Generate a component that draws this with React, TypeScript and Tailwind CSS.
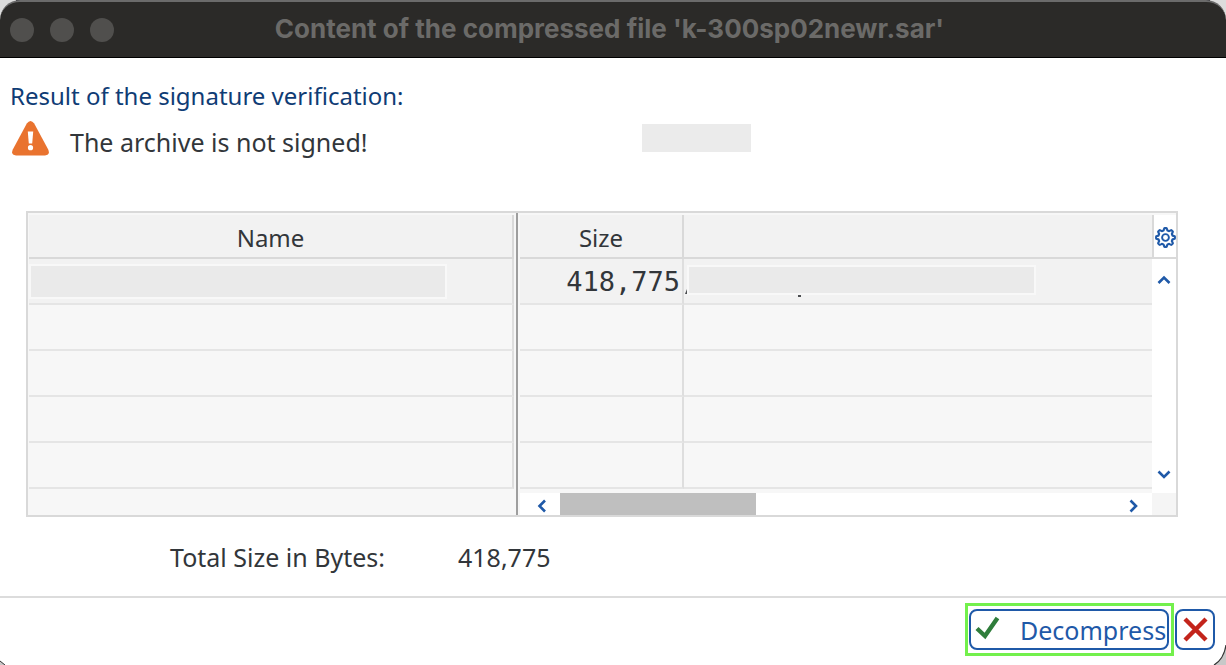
import React from "react";

const bodyText = "font-['Noto_Sans','Liberation_Sans',sans-serif] text-2xl leading-8";
const emptyRows = [1, 2, 3, 4];

function Chevron({ d, label }: { d: string; label: string }) {
  return (
    <button type="button" aria-label={label} className="flex size-5 items-center justify-center">
      <svg width="14" height="14" viewBox="0 0 14 14" fill="none" stroke="#1f59a8" strokeWidth="2.6">
        <path d={d} />
      </svg>
    </button>
  );
}

function Gear() {
  const points: string[] = [];
  for (let i = 0; i < 96; i++) {
    const a = (i / 96) * Math.PI * 2;
    const wave = Math.max(-1, Math.min(1, Math.cos(a * 8) * 1.8));
    const r = 8.3 + wave * 1.1;
    points.push(`${(10.5 + r * Math.sin(a)).toFixed(2)},${(10.5 - r * Math.cos(a)).toFixed(2)}`);
  }
  return (
    <svg width="21" height="21" viewBox="0 0 21 21" fill="none" stroke="#1f59a8" strokeWidth="2.1" strokeLinejoin="round">
      <polygon points={points.join(" ")} />
      <circle cx="10.5" cy="10.5" r="3.4" strokeWidth="1.9" />
    </svg>
  );
}

function TitleBar() {
  return (
    <header className="grid h-[58px] grid-cols-[115px_1fr_132px] items-center rounded-t-[20px] border-t-2 border-b border-t-[#6b6b6b] border-b-black bg-[#2b2a28] pl-[10px]">
      <div className="flex gap-4">
        <button type="button" aria-label="Close window" className="size-6 rounded-full bg-[#504f4d]" />
        <button type="button" aria-label="Minimize window" className="size-6 rounded-full bg-[#504f4d]" />
        <button type="button" aria-label="Zoom window" className="size-6 rounded-full bg-[#504f4d]" />
      </div>
      <h1 className="pb-[2px] text-center font-['Inter','Liberation_Sans',sans-serif] text-[26px] leading-8 font-bold whitespace-nowrap text-[#6b6a68]">
        Content of the compressed file 'k-300sp02newr.sar'
      </h1>
    </header>
  );
}

function FileGrid() {
  return (
    <section aria-label="Archive files" className="mr-12 ml-[26px] flex border-2 border-[#d9d9d9] bg-[#f7f7f7]">
      <div className="w-[486px] shrink-0 pt-[2px] pl-px">
        <table className="w-full table-fixed border-separate border-spacing-0">
          <thead>
            <tr>
              <th className="h-11 border-r-2 border-b-2 border-[#d9d9d9] bg-[#f2f2f2] p-0 pt-1 font-normal">Name</th>
            </tr>
          </thead>
          <tbody>
            <tr>
              <td className="h-[46px] border-r-2 border-b-2 border-r-[#dedede] border-b-[#e5e5e5] bg-[#f2f2f2] p-0">
                <div className="h-[35px] w-[418px] border-2 border-[#f8f8f8] bg-[#eaeaea]" />
              </td>
            </tr>
            {emptyRows.map((row) => (
              <tr key={row}>
                <td className="h-[46px] border-r-2 border-b-2 border-r-[#dedede] border-b-[#e5e5e5] p-0" />
              </tr>
            ))}
          </tbody>
        </table>
      </div>
      <div className="mr-[2px] ml-[2px] w-[2px] shrink-0 bg-[#9e9e9e]" />
      <div className="flex min-w-0 flex-1 flex-col pt-[2px]">
        <div className="flex">
          <table className="flex-1 table-fixed border-separate border-spacing-0">
            <colgroup>
              <col className="w-[164px]" />
              <col />
            </colgroup>
            <thead>
              <tr>
                <th className="h-11 border-r-2 border-b-2 border-[#d9d9d9] bg-[#f2f2f2] p-0 pt-1 font-normal">Size</th>
                <th aria-label="Details" className="h-11 border-b-2 border-[#d9d9d9] bg-[#f2f2f2] p-0" />
              </tr>
            </thead>
            <tbody>
              <tr>
                <td className="h-[46px] border-r-2 border-b-2 border-r-[#dedede] border-b-[#e5e5e5] bg-[#f2f2f2] p-0 pt-[2px] pr-[2px] text-right font-['DejaVu_Sans_Mono','Liberation_Mono',monospace] text-[27px] leading-8">
                  418,775
                </td>
                <td className="h-[46px] border-b-2 border-[#e5e5e5] bg-[#f2f2f2] p-0 pb-[2px]">
                  <div className="flex items-end">
                    <svg width="3" height="5" viewBox="0 0 3 5" className="mb-px shrink-0">
                      <path d="M1 5 L3 0 V5 Z" fill="#4b4d50" />
                    </svg>
                    <div className="relative h-[30px] w-[349px] border-2 border-[#f8f8f8] bg-[#eaeaea]">
                      <span className="absolute top-7 left-[109px] h-[2px] w-[3px] bg-[#4b4d50]" />
                    </div>
                  </div>
                </td>
              </tr>
              {emptyRows.map((row) => (
                <tr key={row}>
                  <td className="h-[46px] border-r-2 border-b-2 border-r-[#dedede] border-b-[#e5e5e5] p-0" />
                  <td className="h-[46px] border-b-2 border-[#e5e5e5] p-0" />
                </tr>
              ))}
            </tbody>
          </table>
          <div className="flex w-6 shrink-0 flex-col">
            <button
              type="button"
              aria-label="Table settings"
              className="flex h-11 items-center justify-end border-b-2 border-l-2 border-[#d9d9d9] bg-white pt-[3px]"
            >
              <Gear />
            </button>
            <div className="flex flex-1 flex-col justify-between bg-white pt-[11px] pb-[5px] pl-[2px]">
              <Chevron label="Scroll up" d="M1.5 10 L7 4.5 L12.5 10" />
              <Chevron label="Scroll down" d="M1.5 4.5 L7 10 L12.5 4.5" />
            </div>
          </div>
        </div>
        <div className="flex h-[26px]">
          <div className="mt-1 flex flex-1 items-center bg-white">
            <div className="flex w-10 justify-center pt-[3px] pl-1">
              <Chevron label="Scroll left" d="M10 1.5 L4.5 7 L10 12.5" />
            </div>
            <div className="h-full flex-1">
              <div className="h-full w-[196px] bg-[#bfbfbf]" />
            </div>
            <div className="flex w-10 justify-center pt-[3px] pl-[2px]">
              <Chevron label="Scroll right" d="M4.5 1.5 L10 7 L4.5 12.5" />
            </div>
          </div>
          <div className="w-6 bg-white pt-1">
            <div className="h-full bg-[#f5f5f5]" />
          </div>
        </div>
      </div>
    </section>
  );
}

export default function App() {
  return (
    <div className={`relative min-h-screen overflow-hidden bg-[#dcdcdc] text-[#32363a] ${bodyText}`}>
      <div className="absolute top-0 right-4 left-4 h-px bg-[#23232b]" />
      <div className="relative flex min-h-screen flex-col">
        <TitleBar />
        <div className="flex flex-1 flex-col bg-white">
          <main className="flex flex-1 flex-col pt-[22px]">
            <h2 className="pl-[10px] text-[#0f3c75]">Result of the signature verification:</h2>
            <div className="mt-2 flex h-9 items-center pl-3">
              <svg width="37" height="35" viewBox="0 0 37 35">
                <path d="M14.8 2.5 Q18.5 -2.5 22.2 2.5 L36.2 28.5 Q38.5 34 33 34.5 H4 Q-1.5 34 .8 28.5 Z" fill="#e9732f" />
                <path d="M15.8 10.5 H21.2 L20.2 22.5 H16.8 Z" fill="#fff" />
                <circle cx="18.5" cy="26.7" r="2.6" fill="#fff" />
              </svg>
              <p className="w-[593px] pt-2 pl-[21px] text-[25px]">The archive is not signed!</p>
              <div className="h-7 w-[109px] bg-[#ebebeb]" />
            </div>
            <div className="mt-[55px]">
              <FileGrid />
            </div>
            <dl className="mt-6 flex pl-[170px] text-[25px]">
              <dt className="w-[288px]">Total Size in Bytes:</dt>
              <dd>418,775</dd>
            </dl>
          </main>
          <footer className="flex h-[69px] items-start justify-end gap-px border-t-2 border-[#dcdcdc] pt-[5px] pr-[11px]">
            <div className="border-[3px] border-[#73f04c] py-[3px] pr-[2px] pl-px">
              <button
                type="button"
                className="flex h-[41px] w-[200px] items-center rounded-lg border-2 border-[#1f59a8] pl-1 text-[25px] text-[#1f59a8]"
              >
                <svg width="25" height="24" viewBox="0 0 25 24" fill="none" stroke="#2f7d3b" strokeWidth="4.4" className="mb-1 shrink-0">
                  <path d="M2 12.5 L10 20 L22.5 2" />
                </svg>
                <span className="pl-5">Decompress</span>
              </button>
            </div>
            <button
              type="button"
              aria-label="Cancel"
              className="mt-1.5 flex h-[41px] w-10 items-center justify-center rounded-lg border-2 border-[#1f59a8]"
            >
              <svg width="25" height="25" viewBox="0 0 25 25" fill="none" stroke="#c3241b" strokeWidth="4.4">
                <path d="M2 2 L23 23 M23 2 L2 23" />
              </svg>
            </button>
          </footer>
        </div>
      </div>
      <svg width="14" height="22" viewBox="0 0 14 22" className="absolute right-0 bottom-0">
        <path d="M14 2 Q12 16 2 22 H14 Z" fill="#c8c8c8" />
        <path d="M14 2 Q12 16 2 22" fill="none" stroke="#333" strokeWidth="1.2" />
      </svg>
      <svg width="6" height="5" viewBox="0 0 6 5" className="absolute bottom-0 left-0">
        <path d="M0 1 L5 5 H0 Z" fill="#c8c8c8" />
        <path d="M0 1 L5 5" stroke="#333" />
      </svg>
    </div>
  );
}
